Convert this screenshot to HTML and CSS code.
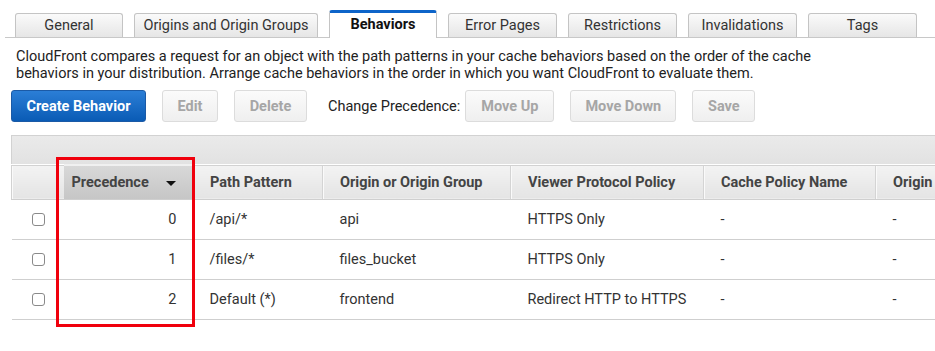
FILE: index.html
```html
<!DOCTYPE html>
<html lang="en">
<head>
    <meta charset="UTF-8">
    <meta name="viewport" content="width=device-width, initial-scale=1.0">
    <title>Behaviors</title>
    <link rel="stylesheet" href="styles.css">
</head>
<body>
    <div class="page">
        <div class="tabs">
            <div class="tab" style="width:108px">General</div>
            <div class="tab" style="width:184px">Origins and Origin Groups</div>
            <div class="tab active" style="width:108px">Behaviors</div>
            <div class="tab" style="width:109px">Error Pages</div>
            <div class="tab" style="width:109px">Restrictions</div>
            <div class="tab" style="width:109px">Invalidations</div>
            <div class="tab" style="width:109px">Tags</div>
        </div>

        <p class="intro">CloudFront compares a request for an object with the path patterns in your cache behaviors based on the order of the cache<br>behaviors in your distribution. Arrange cache behaviors in the order in which you want CloudFront to evaluate them.</p>

        <div class="actions">
            <button class="btn primary" style="width:135px">Create Behavior</button>
            <button class="btn" style="width:56px" disabled>Edit</button>
            <button class="btn" style="width:73px" disabled>Delete</button>
            <span class="label">Change Precedence:</span>
            <button class="btn" style="width:89px" disabled>Move Up</button>
            <button class="btn" style="width:106px" disabled>Move Down</button>
            <button class="btn" style="width:63px" disabled>Save</button>
        </div>

        <div class="grid">
            <div class="grid-toolbar"></div>
            <table class="behaviors">
                <colgroup>
                    <col style="width:52px">
                    <col style="width:129px">
                    <col style="width:130px">
                    <col style="width:188px">
                    <col style="width:193px">
                    <col style="width:172px">
                    <col style="width:160px">
                </colgroup>
                <thead>
                    <tr>
                        <th></th>
                        <th class="sorted">Precedence <span class="arrow"></span></th>
                        <th>Path Pattern</th>
                        <th>Origin or Origin Group</th>
                        <th>Viewer Protocol Policy</th>
                        <th>Cache Policy Name</th>
                        <th>Origin Request Policy</th>
                    </tr>
                </thead>
                <tbody>
                    <tr>
                        <td class="check"><span class="box"></span></td>
                        <td class="num">0</td>
                        <td>/api/*</td>
                        <td>api</td>
                        <td>HTTPS Only</td>
                        <td>-</td>
                        <td>-</td>
                    </tr>
                    <tr>
                        <td class="check"><span class="box"></span></td>
                        <td class="num">1</td>
                        <td>/files/*</td>
                        <td>files_bucket</td>
                        <td>HTTPS Only</td>
                        <td>-</td>
                        <td>-</td>
                    </tr>
                    <tr>
                        <td class="check"><span class="box"></span></td>
                        <td class="num">2</td>
                        <td>Default (*)</td>
                        <td>frontend</td>
                        <td>Redirect HTTP to HTTPS</td>
                        <td>-</td>
                        <td>-</td>
                    </tr>
                </tbody>
            </table>
            <div class="highlight"></div>
        </div>
    </div>
</body>
</html>
```

FILE: styles.css
```css
body {
    margin: 0;
    padding: 0;
    background: #fff;
    color: #222;
    font-family: Roboto, 'Liberation Sans', Arial, sans-serif;
    font-size: 14.5px;
    overflow: hidden;
}
.page {
    width: 935px;
    height: 351px;
    overflow: hidden;
    padding-top: 10px;
}
.tabs {
    display: flex;
    align-items: flex-end;
    gap: 11px;
    margin-left: 5px;
    padding-left: 10px;
    border-bottom: 1px solid #c8c8c8;
    height: 27px;
}
.tab {
    box-sizing: border-box;
    height: 24px;
    border: 1px solid #c4c4c4;
    border-bottom: none;
    border-radius: 3px 3px 0 0;
    background: linear-gradient(#fafafa, #e6e6e6);
    text-align: center;
    line-height: 23px;
    color: #333;
    font-size: 14.5px;
}
.tab.active {
    height: 28px;
    margin-bottom: -1px;
    background: #fff;
    border-top: 3px solid #0d64c9;
    border-color: #0d64c9 #c4c4c4 #fff;
    font-weight: 700;
    color: #111;
    line-height: 24px;
}
.intro {
    margin: 10px 0 0 16px;
    line-height: 17px;
    color: #222;
}
.actions {
    display: flex;
    align-items: center;
    gap: 16px;
    margin: 8px 0 0 11px;
}
.btn {
    box-sizing: border-box;
    height: 32px;
    padding: 0;
    border: 1px solid #dcdcdc;
    border-radius: 3px;
    background: linear-gradient(#fbfbfb, #efefef);
    font-family: inherit;
    font-size: 14.5px;
    font-weight: 700;
    color: #a6a6a6;
}
.btn.primary {
    border-color: #1b5aa6;
    background: linear-gradient(#2b7ed6, #0a5bb5);
    color: #fff;
}
.label {
    margin-left: 5px;
    margin-right: -11px;
    color: #222;
}
.grid {
    position: relative;
    margin: 13px 0 0 11px;
    width: 1100px;
}
.grid-toolbar {
    height: 28px;
    border: 1px solid #d2d2d2;
    border-bottom: none;
    background: linear-gradient(#eaeaea, #e2e2e2);
}
.behaviors {
    border-collapse: collapse;
    table-layout: fixed;
    width: 1024px;
}
.behaviors th {
    height: 33px;
    padding: 0 17px;
    text-align: left;
    font-weight: 700;
    color: #444;
    background: linear-gradient(#f3f3f3, #e4e4e4);
    border-top: 1px solid #d2d2d2;
    border-bottom: 1px solid #cfcfcf;
    border-left: 1px solid #d4d4d4;
    box-shadow: inset 1px 0 0 #fafafa;
    white-space: nowrap;
}
.behaviors th:first-child {
    border-left: 1px solid #d2d2d2;
}
.behaviors th:nth-child(2) {
    border-left: none;
    box-shadow: none;
}
.behaviors th.sorted {
    padding-left: 8px;
    background: linear-gradient(#d8d8d8, #c6c6c6);
    border-top: 2px solid #f0f0f0;
}
.arrow {
    display: inline-block;
    margin-left: 14px;
    vertical-align: middle;
    width: 0;
    height: 0;
    border-left: 5px solid transparent;
    border-right: 5px solid transparent;
    border-top: 5px solid #111;
}
.behaviors td {
    height: 39px;
    padding: 0 17px;
    border-bottom: 1px solid #cfcfcf;
    color: #333;
    white-space: nowrap;
}
.behaviors td.num {
    text-align: right;
    padding-right: 16px;
}
.behaviors td.check {
    padding: 0 0 0 20px;
}
.box {
    display: block;
    width: 11px;
    height: 11px;
    border: 1px solid #8a8a8a;
    border-radius: 3px;
    background: #fff;
}
/* annotation box drawn over the precedence column */
.highlight {
    position: absolute;
    left: 45px;
    top: 22px;
    width: 133px;
    height: 164px;
    border: 3px solid #f0000c;
    pointer-events: none;
}
```
